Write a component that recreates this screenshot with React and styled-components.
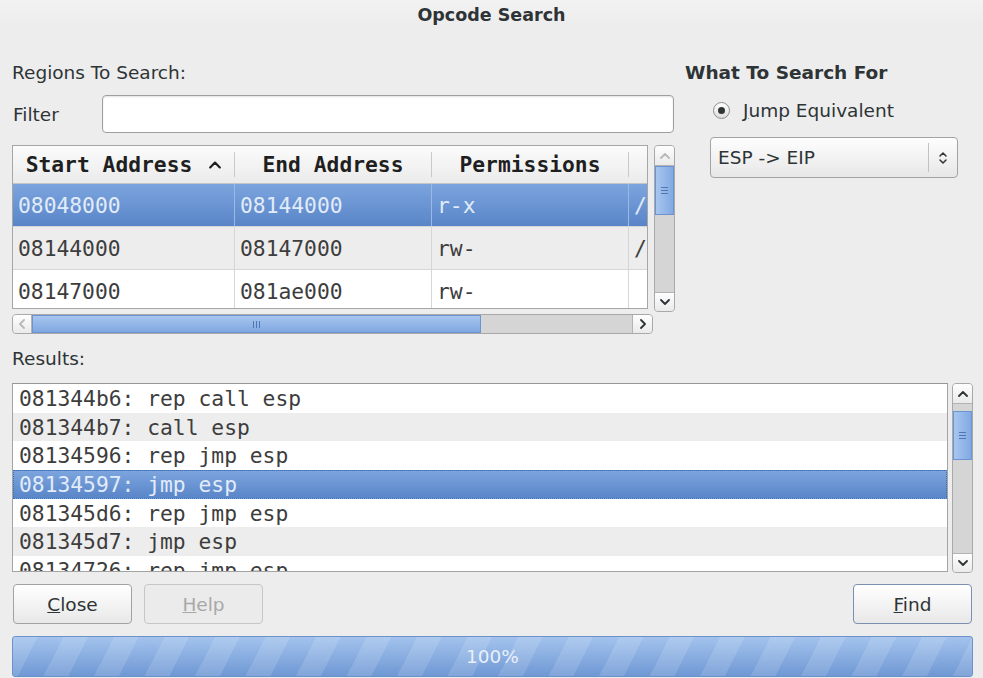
import styled, { createGlobalStyle } from "styled-components";

const GlobalStyle = createGlobalStyle`
  html, body {
    margin: 0;
    padding: 0;
    background: #ededed;
  }
  body {
    font-family: "DejaVu Sans", "Noto Sans", sans-serif;
    color: #2e3436;
  }
`;

const MONO = `"DejaVu Sans Mono", "Liberation Mono", monospace`;
const SELECTED_BG = "linear-gradient(#7ca5de, #5985c8)";

const Window = styled.div`
  width: 983px;
  height: 678px;
  overflow: hidden;
  background: #ededed;
  font-size: 18.5px;
`;

const TitleBar = styled.div`
  height: 29px;
  display: flex;
  align-items: center;
  justify-content: center;
  font-weight: 700;
  font-size: 17.5px;
  background: linear-gradient(#f2f2f2, #ececec);
`;

const Body = styled.div`
  padding: 0 10px 0 12px;
  display: flex;
  flex-direction: column;
`;

const TopSection = styled.div`
  display: flex;
  gap: 10px;
  margin-top: 33px;
`;

const LeftPane = styled.div`
  width: 663px;
  display: flex;
  flex-direction: column;
`;

const RightPane = styled.div`
  flex: 1;
  display: flex;
  flex-direction: column;
`;

const Label = styled.div`
  height: 22px;
  line-height: 22px;
  font-weight: ${(p) => (p.$bold ? 700 : 400)};
  margin-top: ${(p) => p.$mt || 0}px;
  white-space: nowrap;
`;

const FilterRow = styled.div`
  display: flex;
  align-items: center;
  height: 38px;
  margin-top: 11px;
`;

const FilterLabel = styled.div`
  width: 89px;
  padding-left: 1px;
`;

const TextInput = styled.input`
  width: 572px;
  height: 38px;
  box-sizing: border-box;
  border: 1px solid #9f9f9f;
  border-radius: 4px;
  background: #fff;
  box-shadow: inset 0 1px 2px rgba(0, 0, 0, 0.12);
  outline: none;
  font: inherit;
`;

const TableArea = styled.div`
  display: flex;
  gap: 6px;
  align-items: flex-start;
  margin-top: 12px;
`;

const Table = styled.div`
  width: 637px;
  height: 164px;
  box-sizing: border-box;
  border: 1px solid #a6a6a6;
  background: #fff;
  overflow: hidden;
  font-family: ${MONO};
  font-size: 21.3px;
`;

const HeaderRow = styled.div`
  height: 38px;
  box-sizing: border-box;
  display: flex;
  align-items: center;
  border-bottom: 1px solid #c4c4c4;
  background: linear-gradient(#fbfbfb, #ebebeb);
`;

const HeaderCell = styled.div`
  width: ${(p) => (p.$w ? `${p.$w}px` : "auto")};
  flex: ${(p) => (p.$w ? "0 0 auto" : "1")};
  display: flex;
  align-items: center;
  justify-content: center;
  gap: 17px;
  font-weight: 700;
  color: #1f1f1f;
`;

const HeaderDivider = styled.div`
  width: 1px;
  height: 25px;
  background: #c9c9c9;
`;

const Row = styled.div`
  height: 43px;
  box-sizing: border-box;
  display: flex;
  border-bottom: 1px solid #d6d6d6;
  background: ${(p) => (p.$selected ? SELECTED_BG : p.$alt ? "#ededed" : "#fff")};
  color: ${(p) => (p.$selected ? "#e2ebf8" : "#3d3d3d")};
`;

const Cell = styled.div`
  width: ${(p) => (p.$w ? `${p.$w}px` : "auto")};
  flex: ${(p) => (p.$w ? "0 0 auto" : "1")};
  box-sizing: border-box;
  display: flex;
  align-items: center;
  padding-left: 5px;
  overflow: hidden;
  white-space: nowrap;
  border-right: ${(p) => (p.$last ? "none" : `1px solid ${p.$selected ? "#9ab9e4" : "#d6d6d6"}`)};
`;

const ScrollTrack = styled.div`
  display: flex;
  flex-direction: ${(p) => (p.$horizontal ? "row" : "column")};
  width: ${(p) => p.$w}px;
  height: ${(p) => p.$h}px;
  margin-top: ${(p) => p.$mt || 0}px;
  box-sizing: border-box;
  border: 1px solid #a9a9a9;
  border-radius: 4px;
  background: #d5d5d5;
  overflow: hidden;
`;

const ScrollButton = styled.div`
  flex: 0 0 ${(p) => p.$size}px;
  display: flex;
  align-items: center;
  justify-content: center;
  background: linear-gradient(#fefefe, #eaeaea);
  box-sizing: border-box;
  border-${(p) => p.$edge}: 1px solid #b3b3b3;
`;

const ScrollThumb = styled.div`
  flex: 0 0 ${(p) => p.$size}px;
  box-sizing: border-box;
  margin-${(p) => (p.$horizontal ? "left" : "top")}: ${(p) => p.$offset}px;
  display: flex;
  align-items: center;
  justify-content: center;
  border: 1px solid #6b94d0;
  background: ${(p) =>
    p.$horizontal
      ? "linear-gradient(#a8c6ef, #7ea7e1)"
      : "linear-gradient(to right, #a8c6ef, #81a9e2)"};
`;

const ScrollFill = styled.div`
  flex: 1;
`;

const RadioRow = styled.div`
  display: flex;
  align-items: center;
  gap: 13px;
  height: 22px;
  margin-top: 15px;
  padding-left: 28px;
`;

const RadioCircle = styled.span`
  width: 17px;
  height: 17px;
  box-sizing: border-box;
  border-radius: 50%;
  border: 1px solid #8d8d8d;
  background: linear-gradient(#ffffff, #dedede);
  display: flex;
  align-items: center;
  justify-content: center;

  &::after {
    content: "";
    width: 7px;
    height: 7px;
    border-radius: 50%;
    background: #2e3436;
  }
`;

const Combo = styled.div`
  width: 248px;
  height: 41px;
  margin-top: 16px;
  margin-left: 25px;
  box-sizing: border-box;
  border: 1px solid #a3a3a3;
  border-radius: 4px;
  background: linear-gradient(#fefefe, #e7e7e7);
  display: flex;
  align-items: center;
  padding-left: 7px;
`;

const ComboText = styled.div`
  flex: 1;
`;

const ComboSep = styled.div`
  width: 1px;
  height: 29px;
  background: #c2c2c2;
`;

const ComboArrow = styled.div`
  width: 28px;
  display: flex;
  justify-content: center;
`;

const ResultsArea = styled.div`
  display: flex;
  gap: 4px;
  height: 190px;
  margin-top: 13px;
`;

const ResultsList = styled.div`
  width: 936px;
  height: 189px;
  box-sizing: border-box;
  border: 1px solid #a4a4a4;
  border-top-color: #969696;
  background: #fff;
  overflow: hidden;
  font-family: ${MONO};
  font-size: 21.3px;
`;

const ResultItem = styled.div`
  height: 28.7px;
  box-sizing: border-box;
  display: flex;
  align-items: center;
  padding-left: 5px;
  white-space: pre;
  background: ${(p) => (p.$selected ? SELECTED_BG : p.$alt ? "#ededed" : "#fff")};
  color: ${(p) => (p.$selected ? "#e2ebf8" : "#3d3d3d")};
  border: 1px ${(p) => (p.$selected ? "dotted #3f6fb2" : "solid transparent")};
`;

const ButtonRow = styled.div`
  display: flex;
  gap: 12px;
  height: 40px;
  margin-top: 11px;
  padding: 0 1px;
`;

const Button = styled.button`
  width: 119px;
  height: 40px;
  box-sizing: border-box;
  margin-left: ${(p) => (p.$pushRight ? "auto" : "0")};
  border-radius: 4px;
  border: 1px solid ${(p) => (p.$default ? "#7b90b1" : p.disabled ? "#c6c6c6" : "#a2a2a2")};
  background: ${(p) => (p.disabled ? "#ebebeb" : "linear-gradient(#ffffff, #e8e8e8)")};
  box-shadow: ${(p) => (p.disabled ? "none" : "inset 0 1px 0 #fff")};
  color: ${(p) => (p.disabled ? "#a8a8a8" : "#2e3436")};
  font-family: inherit;
  font-size: 18.5px;
  padding: 0;
`;

const Progress = styled.div`
  height: 41px;
  margin-top: 12px;
  box-sizing: border-box;
  border: 1px solid #6d92cb;
  border-radius: 3px;
  display: flex;
  align-items: center;
  justify-content: center;
  color: #e9f0fa;
  background:
    repeating-linear-gradient(
      117deg,
      rgba(255, 255, 255, 0.13) 0 22px,
      rgba(255, 255, 255, 0) 22px 45px
    ),
    linear-gradient(#a3c3ed, #6f98d4);
`;

function Chevron({ dir, color = "#2e3436", size = 10 }) {
  const paths = {
    up: "M1 7 L5 3 L9 7",
    down: "M1 3 L5 7 L9 3",
    left: "M7 1 L3 5 L7 9",
    right: "M3 1 L7 5 L3 9",
  };
  return (
    <svg width={size} height={size} viewBox="0 0 10 10">
      <path d={paths[dir]} fill="none" stroke={color} strokeWidth="1.8" strokeLinecap="round" strokeLinejoin="round" />
    </svg>
  );
}

function Grip({ horizontal }) {
  return horizontal ? (
    <svg width="9" height="9" viewBox="0 0 9 9">
      <path d="M1.5 1v7M4.5 1v7M7.5 1v7" stroke="#4f77b3" strokeWidth="1" />
    </svg>
  ) : (
    <svg width="9" height="9" viewBox="0 0 9 9">
      <path d="M1 1.5h7M1 4.5h7M1 7.5h7" stroke="#4f77b3" strokeWidth="1" />
    </svg>
  );
}

function VScrollbar({ height, mt, thumbOffset, thumbSize, upDisabled }) {
  return (
    <ScrollTrack $w={21} $h={height} $mt={mt}>
      <ScrollButton $size={20} $edge="bottom">
        <Chevron dir="up" color={upDisabled ? "#b8b8b8" : "#2e3436"} />
      </ScrollButton>
      <ScrollThumb $size={thumbSize} $offset={thumbOffset}>
        <Grip />
      </ScrollThumb>
      <ScrollFill />
      <ScrollButton $size={19} $edge="top">
        <Chevron dir="down" />
      </ScrollButton>
    </ScrollTrack>
  );
}

function HScrollbar() {
  return (
    <ScrollTrack $horizontal $w={641} $h={20} $mt={2}>
      <ScrollButton $size={19} $edge="right">
        <Chevron dir="left" color="#b8b8b8" />
      </ScrollButton>
      <ScrollThumb $horizontal $size={449} $offset={0}>
        <Grip horizontal />
      </ScrollThumb>
      <ScrollFill />
      <ScrollButton $size={20} $edge="left">
        <Chevron dir="right" />
      </ScrollButton>
    </ScrollTrack>
  );
}

const regions = [
  { start: "08048000", end: "08144000", perm: "r-x", name: "/" },
  { start: "08144000", end: "08147000", perm: "rw-", name: "/" },
  { start: "08147000", end: "081ae000", perm: "rw-", name: "" },
];

const results = [
  "081344b6: rep call esp",
  "081344b7: call esp",
  "08134596: rep jmp esp",
  "08134597: jmp esp",
  "081345d6: rep jmp esp",
  "081345d7: jmp esp",
  "08134726: rep jmp esp",
];

function RegionsTable() {
  return (
    <Table>
      <HeaderRow>
        <HeaderCell $w={221}>
          Start Address
          <Chevron dir="up" color="#1f1f1f" size={12} />
        </HeaderCell>
        <HeaderDivider />
        <HeaderCell $w={196}>End Address</HeaderCell>
        <HeaderDivider />
        <HeaderCell $w={196}>Permissions</HeaderCell>
        <HeaderDivider />
        <HeaderCell />
      </HeaderRow>
      {regions.map((r, i) => {
        const selected = i === 0;
        return (
          <Row key={r.start} $selected={selected} $alt={i % 2 === 1}>
            <Cell $w={222} $selected={selected}>{r.start}</Cell>
            <Cell $w={197} $selected={selected}>{r.end}</Cell>
            <Cell $w={197} $selected={selected}>{r.perm}</Cell>
            <Cell $last>{r.name}</Cell>
          </Row>
        );
      })}
    </Table>
  );
}

export default function App() {
  return (
    <>
      <GlobalStyle />
      <Window>
        <TitleBar>Opcode Search</TitleBar>
        <Body>
          <TopSection>
            <LeftPane>
              <Label>Regions To Search:</Label>
              <FilterRow>
                <FilterLabel>Filter</FilterLabel>
                <TextInput />
              </FilterRow>
              <TableArea>
                <RegionsTable />
                <VScrollbar height={167} thumbOffset={0} thumbSize={49} upDisabled />
              </TableArea>
              <HScrollbar />
            </LeftPane>
            <RightPane>
              <Label $bold>What To Search For</Label>
              <RadioRow>
                <RadioCircle />
                <span>
                  <u>J</u>ump Equivalent
                </span>
              </RadioRow>
              <Combo>
                <ComboText>ESP -&gt; EIP</ComboText>
                <ComboSep />
                <ComboArrow>
                  <svg width="10" height="16" viewBox="0 0 10 16">
                    <path d="M2 6 L5 3 L8 6 M2 10 L5 13 L8 10" fill="none" stroke="#2e3436" strokeWidth="1.5" strokeLinecap="round" strokeLinejoin="round" />
                  </svg>
                </ComboArrow>
              </Combo>
            </RightPane>
          </TopSection>

          <Label $mt={14}>Results:</Label>
          <ResultsArea>
            <ResultsList>
              {results.map((line, i) => (
                <ResultItem key={line} $alt={i % 2 === 1} $selected={i === 3}>
                  {line}
                </ResultItem>
              ))}
            </ResultsList>
            <VScrollbar height={190} thumbOffset={7} thumbSize={49} />
          </ResultsArea>

          <ButtonRow>
            <Button>
              <u>C</u>lose
            </Button>
            <Button disabled>
              <u>H</u>elp
            </Button>
            <Button $pushRight $default>
              <u>F</u>ind
            </Button>
          </ButtonRow>

          <Progress>100%</Progress>
        </Body>
      </Window>
    </>
  );
}
